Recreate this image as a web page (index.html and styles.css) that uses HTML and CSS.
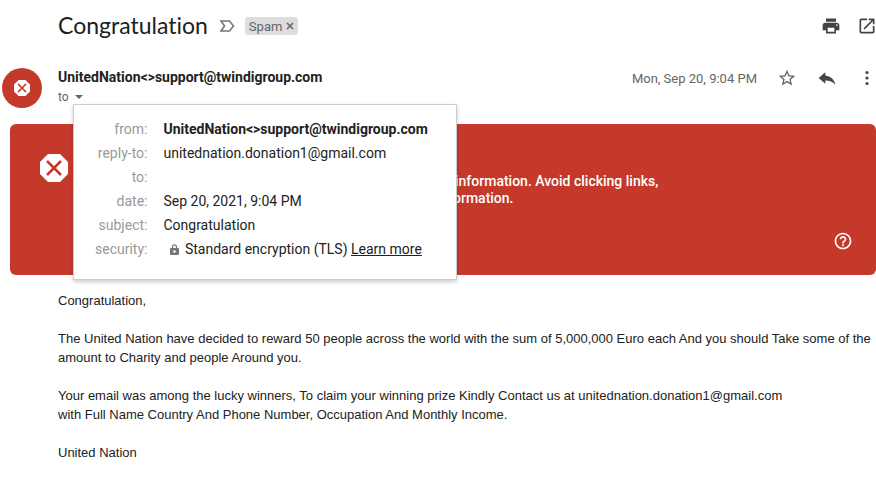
FILE: index.html
```
<!DOCTYPE html>
<html lang="en">
<head>
    <meta charset="UTF-8">
    <meta name="viewport" content="width=device-width, initial-scale=1.0">
    <title>Congratulation</title>
    <link rel="stylesheet" href="styles.css">
</head>
<body>
    <header class="subject-bar">
        <h1>Congratulation</h1>
        <button class="icon-btn importance" aria-label="Mark as important">
            <svg width="16" height="12" viewBox="0 0 16 12" fill="none" stroke="#777" stroke-width="1.600"><path d="M2 1h8.500L14.500 6l-4 5H2l3.500-5z"/></svg>
        </button>
        <span class="label-chip">Spam
            <button class="icon-btn" aria-label="Remove label Spam">
                <svg width="8" height="8" viewBox="0 0 8 8" fill="none" stroke="#666" stroke-width="1.600"><path d="M1 1l6 6M7 1L1 7"/></svg>
            </button>
        </span>
        <div class="subject-actions">
            <button class="icon-btn" aria-label="Print">
                <svg width="20" height="20" viewBox="0 0 24 24" fill="#444"><path d="M19 8H5c-1.660 0-3 1.340-3 3v6h4v4h12v-4h4v-6c0-1.660-1.340-3-3-3zm-3 11H8v-5h8v5zm3-7c-.550 0-1-.450-1-1s.450-1 1-1 1 .450 1 1-.450 1-1 1zm-1-9H6v4h12V3z"/></svg>
            </button>
            <button class="icon-btn" aria-label="Open in new window">
                <svg width="20" height="20" viewBox="0 0 24 24" fill="#444"><path d="M19 19H5V5h7V3H5a2 2 0 0 0-2 2v14a2 2 0 0 0 2 2h14c1.100 0 2-.900 2-2v-7h-2v7zM14 3v2h3.590l-9.830 9.830 1.410 1.410L19 6.410V10h2V3h-7z"/></svg>
            </button>
        </div>
    </header>

    <section class="sender">
        <div class="avatar">
            <svg width="16" height="16" viewBox="0 0 28 28"><path fill="#fff" d="M8 0h12l8 8v12l-8 8H8l-8-8V8z"/><path stroke="#c5392a" stroke-width="3" d="M7 7l14 14M21 7L7 21"/></svg>
        </div>
        <div class="sender-info">
            <div class="sender-name">UnitedNation&lt;&gt;support@twindigroup.com</div>
            <div class="recipient">
                to
                <button class="icon-btn" aria-label="Show details">
                    <svg width="8" height="4" viewBox="0 0 8 4" fill="#666"><path d="M0 0h8L4 4z"/></svg>
                </button>
                <div class="details">
                    <table>
                        <tr><th>from:</th><td><b>UnitedNation&lt;&gt;support@twindigroup.com</b></td></tr>
                        <tr><th>reply-to:</th><td>unitednation.donation1@gmail.com</td></tr>
                        <tr><th>to:</th><td></td></tr>
                        <tr><th>date:</th><td>Sep 20, 2021, 9:04 PM</td></tr>
                        <tr><th>subject:</th><td>Congratulation</td></tr>
                        <tr>
                            <th>security:</th>
                            <td>
                                <svg class="lock" width="9" height="11" viewBox="0 0 9 11"><path fill="none" stroke="#777" stroke-width="1.200" d="M2.500 5V2.800a2 2 0 0 1 4 0V5"/><rect y="4" width="9" height="7" rx="1" fill="#777"/><circle cx="4.500" cy="7.500" r="1.200" fill="#fff"/></svg>
                                Standard encryption (TLS) <a href="#">Learn more</a>
                            </td>
                        </tr>
                    </table>
                </div>
            </div>
        </div>
        <div class="sender-actions">
            <time datetime="2021-09-20T21:04">Mon, Sep 20, 9:04 PM</time>
            <button class="icon-btn" aria-label="Star">
                <svg width="20" height="20" viewBox="0 0 24 24" fill="#666"><path d="M22 9.240l-7.190-.620L12 2 9.190 8.630 2 9.240l5.460 4.730L5.820 21 12 17.270 18.180 21l-1.630-7.030L22 9.240zM12 15.400l-3.760 2.270 1-4.280-3.320-2.880 4.380-.380L12 6.100l1.710 4.040 4.380.380-3.320 2.880 1 4.280L12 15.400z"/></svg>
            </button>
            <button class="icon-btn" aria-label="Reply">
                <svg width="20" height="20" viewBox="0 0 24 24" fill="#444"><path d="M10 9V5l-8 7 8 7v-4.100c5 0 9 1.600 12 5.100-1-5-4.500-10-12-11z"/></svg>
            </button>
            <button class="icon-btn" aria-label="More">
                <svg width="20" height="20" viewBox="0 0 20 20" fill="#444"><circle cx="10" cy="4.500" r="1.600"/><circle cx="10" cy="10" r="1.600"/><circle cx="10" cy="15.500" r="1.600"/></svg>
            </button>
        </div>
    </section>

    <section class="warning">
        <svg width="28" height="28" viewBox="0 0 28 28"><path fill="#fff" d="M8 0h12l8 8v12l-8 8H8l-8-8V8z"/><path stroke="#c5392a" stroke-width="2.500" d="M7 7l14 14M21 7L7 21"/></svg>
        <p>Similar messages were used to steal people's personal information. Avoid clicking links, downloading attachments, or replying with personal information.</p>
        <button class="icon-btn help" aria-label="Help">
            <svg width="20" height="20" viewBox="0 0 24 24" fill="#fff"><path d="M11 18h2v-2h-2v2zm1-16C6.480 2 2 6.480 2 12s4.480 10 10 10 10-4.480 10-10S17.520 2 12 2zm0 18c-4.410 0-8-3.590-8-8s3.590-8 8-8 8 3.590 8 8-3.590 8-8 8zm0-14c-2.210 0-4 1.790-4 4h2c0-1.100.900-2 2-2s2 .900 2 2c0 2-3 1.750-3 5h2c0-2.250 3-2.500 3-5 0-2.210-1.790-4-4-4z"/></svg>
        </button>
    </section>

    <article class="message">
        <p>Congratulation,</p>
        <p>The United Nation have decided to reward 50 people across the world with the sum of 5,000,000 Euro each And you should Take some of the amount to Charity and people Around you.</p>
        <p>Your email was among the lucky winners, To claim your winning prize Kindly Contact us at unitednation.donation1@gmail.com<br>with Full Name Country And Phone Number, Occupation And Monthly Income.</p>
        <p>United Nation</p>
    </article>
</body>
</html>
```
FILE: styles.css
```
body {
    margin: 0;
    background: #fff;
    color: #222;
    font-family: Roboto, Arial, sans-serif;
    font-size: 14px;
}

.icon-btn {
    display: flex;
    padding: 0;
    border: none;
    background: none;
    cursor: pointer;
}

/* Subject line */
.subject-bar {
    display: flex;
    align-items: center;
    height: 52px;
    padding-left: 58px;
}

h1 {
    margin: 0;
    padding-bottom: 3px;
    color: #202124;
    font-family: Lato, sans-serif;
    font-size: 23px;
    font-weight: 400;
    font-variant-ligatures: none;
}

.importance {
    margin: 0 10px 0 11px;
}

.label-chip {
    display: flex;
    align-items: center;
    gap: 4px;
    height: 18px;
    padding: 0 4px;
    border-radius: 3px;
    background: #ddd;
    color: #666;
    font-size: 13px;
}

.subject-actions {
    display: flex;
    gap: 16px;
    margin-left: auto;
    margin-right: -1px;
}

/* Sender */
.sender {
    display: flex;
    padding: 16px 0 16px 2px;
}

.avatar {
    display: flex;
    align-items: center;
    justify-content: center;
    width: 40px;
    height: 40px;
    margin-right: 16px;
    border-radius: 50%;
    background: #c5392a;
}

.sender-info {
    flex: 1;
}

.sender-name {
    font-weight: 700;
    line-height: 18px;
}

.recipient {
    display: flex;
    align-items: center;
    gap: 6px;
    position: relative;
    color: #666;
    font-size: 12px;
    line-height: 22px;
}

.sender-actions {
    display: flex;
    align-items: center;
    gap: 20px;
    height: 20px;
    margin-right: -1px;
}

time {
    color: #666;
    font-size: 13px;
}

/* Message details, opened over the warning */
.details {
    position: absolute;
    top: 18px;
    left: 15px;
    z-index: 1;
    padding: 12px 28px 18px 21px;
    border: 1px solid #ccc;
    background: #fff;
    box-shadow: 0 2px 4px rgba(0, 0, 0, 0.2);
    white-space: nowrap;
}

.details table {
    border-collapse: collapse;
    color: #222;
    font-size: 14px;
}

.details th,
.details td {
    height: 24px;
    padding: 0;
    line-height: 24px;
}

.details th {
    padding-right: 16px;
    color: #999;
    font-weight: 400;
    text-align: right;
}

.details a {
    color: #222;
}

.lock {
    margin: 0 2px 0 7px;
    vertical-align: -1px;
}

/* Warning banner */
.warning {
    display: flex;
    align-items: flex-start;
    min-height: 91px;
    margin-left: 10px;
    padding: 30px 23px 30px 30px;
    border-radius: 6px;
    background: #c5392a;
    color: #fff;
}

.warning p {
    max-width: 600px;
    margin: 19px 0 0 42px;
    font-weight: 500;
    line-height: 17px;
}

.help {
    align-self: flex-end;
    margin: 0 0 -6px auto;
}

/* Mail text */
.message {
    padding: 16px 0 16px 58px;
    font-family: "Liberation Sans", Arial, sans-serif;
    font-size: 13px;
    line-height: 19px;
}

.message p {
    margin: 0 0 19px;
}
```
